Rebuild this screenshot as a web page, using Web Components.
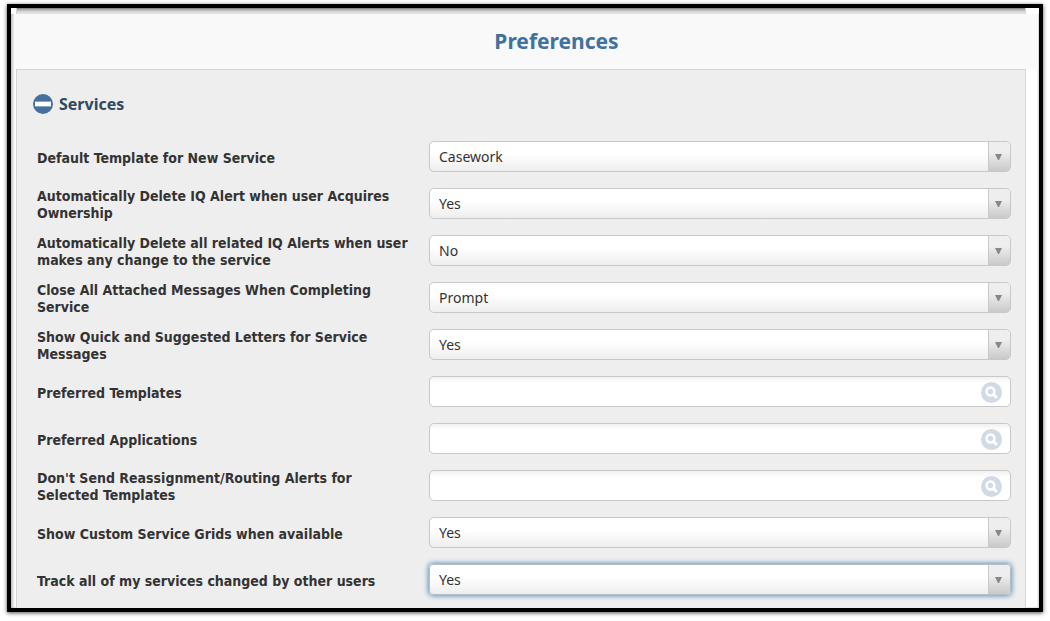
<!DOCTYPE html>
<html lang="en">
<head>
<meta charset="utf-8">
<title>Preferences</title>
<style>
  body {
    margin: 0;
    background: #fff;
    color: #333;
    font-family: "Noto Sans", "DejaVu Sans Condensed", sans-serif;
    font-size: 14px;
    line-height: 17px;
  }
</style>
</head>
<body>
<pref-frame>
  <pref-title>Preferences</pref-title>
  <pref-section heading="Services">
    <pref-select label="Default Template for New Service" options="Casework"></pref-select>
    <pref-select label="Automatically Delete IQ Alert when user Acquires Ownership" options="Yes,No"></pref-select>
    <pref-select label="Automatically Delete all related IQ Alerts when user makes any change to the service" options="No,Yes"></pref-select>
    <pref-select label="Close All Attached Messages When Completing Service" options="Prompt,Yes,No"></pref-select>
    <pref-select label="Show Quick and Suggested Letters for Service Messages" options="Yes,No"></pref-select>
    <pref-lookup label="Preferred Templates"></pref-lookup>
    <pref-lookup label="Preferred Applications"></pref-lookup>
    <pref-lookup label="Don't Send Reassignment/Routing Alerts for Selected Templates"></pref-lookup>
    <pref-select label="Show Custom Service Grids when available" options="Yes,No"></pref-select>
    <pref-select label="Track all of my services changed by other users" options="Yes,No" active></pref-select>
  </pref-section>
</pref-frame>

<script>
class PrefFrame extends HTMLElement {
  constructor() {
    super();
    this.attachShadow({ mode: "open" }).innerHTML = `
      <style>
        :host { display: block; padding: 4px 7px 8px; }
        main {
          display: grid;
          border: 4px solid #000;
          box-shadow: 0 1px 4px rgba(0,0,0,.7);
        }
        .previous {
          box-sizing: border-box;
          height: 6px;
          margin: 0 13px 0 5px;
          border: solid #d4d4d4;
          border-width: 0 1px;
          background: linear-gradient(#777, #b5b5b5 30%, #dedede 70%, #e4e4e4);
        }
        .body { box-shadow: inset 3px 0 3px -1px rgba(0,0,0,.25), inset -1px 0 2px rgba(0,0,0,.2); }
      </style>
      <main><div class="previous"></div><div class="body"><slot></slot></div></main>`;
  }
}

class PrefTitle extends HTMLElement {
  constructor() {
    super();
    this.attachShadow({ mode: "open" }).innerHTML = `
      <style>
        :host { display: block; margin: 0 1px 0 3px; padding: 14px 0 15px 61px; background: #f9f9f9; }
        h1 { margin: 0; font-size: 21px; line-height: 26px; text-align: center; color: #41719f; }
      </style>
      <h1><slot></slot></h1>`;
  }
}

class PrefSection extends HTMLElement {
  connectedCallback() {
    this.attachShadow({ mode: "open" }).innerHTML = `
      <style>
        :host {
          display: block;
          margin: 0 13px 0 5px;
          padding: 24px 14px 10px 16px;
          border: solid #d4d4d4;
          border-width: 1px 1px 0;
          background: #eee;
        }
        h2 { margin: 0 0 27px; font-size: 16px; line-height: 20px; }
        button {
          display: flex; align-items: center; gap: 6px;
          padding: 0; border: 0; background: none;
          font: inherit; color: #30495f; cursor: pointer;
        }
        .rows { display: grid; gap: 13px; padding-left: 4px; }
        .rows[hidden] { display: none; }
      </style>
      <h2><button type="button" aria-expanded="true">
        <svg width="20" height="20" viewBox="0 0 20 20" aria-hidden="true">
          <circle cx="10" cy="10" r="10" fill="#456f9f"/><rect x="2" y="7" width="16" height="6" fill="#8aa5c3"/><rect x="2" y="8" width="16" height="4" fill="#fff"/>
        </svg><span></span></button></h2>
      <div class="rows"><slot></slot></div>`;
    const button = this.shadowRoot.querySelector("button");
    const rows = this.shadowRoot.querySelector(".rows");
    this.shadowRoot.querySelector("span").textContent = this.getAttribute("heading");
    button.addEventListener("click", () => {
      rows.hidden = !rows.hidden;
      button.setAttribute("aria-expanded", String(!rows.hidden));
    });
  }
}

const rowStyle = `
  :host {
    display: grid;
    grid-template-columns: 392px minmax(0, 1fr);
    min-height: 34px;
  }
  label { align-self: center; padding-right: 12px; font-family: "DejaVu Sans Condensed", "Noto Sans", sans-serif; font-weight: bold; color: #333; }
  .control { display: grid; align-self: start; grid-template-columns: minmax(0, 1fr) auto; }
  select, input {
    grid-area: 1 / 1 / 2 / 3;
    box-sizing: border-box;
    width: 100%; height: 31px;
    margin: 0; padding: 0 32px 0 9px;
    border: 1px solid #c8c8c8; border-radius: 5px;
    color: #333; font: inherit; font-size: 14px;
    outline: none; appearance: none;
  }`;

class PrefSelect extends HTMLElement {
  connectedCallback() {
    this.attachShadow({ mode: "open" }).innerHTML = `
      <style>${rowStyle}
        select { background: linear-gradient(#fff 40%, #eee); }
        .arrow {
          grid-area: 1 / 2; z-index: 1; pointer-events: none;
          display: flex; align-items: center; justify-content: center;
          box-sizing: border-box; padding: 1px 2px 0 0;
          width: 22px; margin: 1px 1px 1px 0;
          border-left: 1px solid #c8c8c8; border-radius: 0 4px 4px 0;
          background: linear-gradient(#eee 35%, #c9c9c9);
        }
        :host([active]) select, select:focus { box-shadow: 0 0 5px 1px #5b93bf; border-color: #b4bfc8; border-radius: 4px; }
      </style>
      <label for="field"></label>
      <div class="control">
        <select id="field"></select>
        <span class="arrow"><svg width="7" height="6" viewBox="0 0 7 6" aria-hidden="true"><path d="M0 0h7L4 6H3z" fill="#888"/></svg></span>
      </div>`;
    this.shadowRoot.querySelector("label").textContent = this.getAttribute("label");
    const select = this.shadowRoot.querySelector("select");
    for (const text of this.getAttribute("options").split(",")) select.add(new Option(text));
  }
}

class PrefLookup extends HTMLElement {
  connectedCallback() {
    this.attachShadow({ mode: "open" }).innerHTML = `
      <style>${rowStyle}
        input { background: linear-gradient(#f1f1f1, #fff 6px); }
        button {
          grid-area: 1 / 2; align-self: center; display: block;
          margin: 1px 9px 0 0; padding: 0; border: 0; background: none; cursor: pointer;
        }
        svg { display: block; }
      </style>
      <label for="field"></label>
      <div class="control">
        <input id="field" type="text">
        <button type="button" aria-label="Search"><svg width="21" height="21" viewBox="0 0 21 21" aria-hidden="true">
          <circle cx="10.500" cy="10.500" r="10.500" fill="#d1dbe7"/>
          <circle cx="9.500" cy="9.500" r="3.900" fill="none" stroke="#fff" stroke-width="2.500"/>
          <path d="M12.500 12.500l2.500 2.500" stroke="#fff" stroke-width="3" stroke-linecap="round"/>
        </svg></button>
      </div>`;
    this.shadowRoot.querySelector("label").textContent = this.getAttribute("label");
  }
}

customElements.define("pref-frame", PrefFrame);
customElements.define("pref-title", PrefTitle);
customElements.define("pref-section", PrefSection);
customElements.define("pref-select", PrefSelect);
customElements.define("pref-lookup", PrefLookup);
</script>
</body>
</html>
